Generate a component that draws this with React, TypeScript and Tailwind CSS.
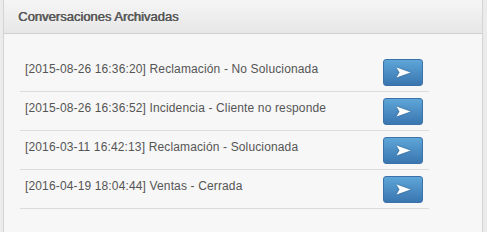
import React from 'react';

const conversations = [
    { id: 1, date: '2015-08-26 16:36:20', title: 'Reclamación - No Solucionada' },
    { id: 2, date: '2015-08-26 16:36:52', title: 'Incidencia - Cliente no responde' },
    { id: 3, date: '2016-03-11 16:42:13', title: 'Reclamación - Solucionada' },
    { id: 4, date: '2016-04-19 18:04:44', title: 'Ventas - Cerrada' },
];

const ArrowIcon = () => (
    <svg width="15" height="11" viewBox="0 0 15 11" className="drop-shadow-[0_0_1px_rgba(0,0,0,0.25)]">
        <path d="M0.5 0.5 L14.5 5.5 L0.5 10.5 L3.5 5.5 Z" fill="#ffffff" />
    </svg>
);

export default function App() {
    return (
        <div className="w-full h-[232px] overflow-hidden bg-[#ebebeb] pl-[3px] pr-[4px] font-['Liberation_Sans',Arial,sans-serif]">
            <div className="h-full bg-[#f7f7f7] border-x border-[#d4d4d4]">
                <div className="h-[34px] flex items-center px-[14px] bg-gradient-to-b from-[#f5f5f5] to-[#e7e7e7] border-b border-[#d0d0d0]">
                    <h2 className="text-[13px] leading-[16px] text-[#555555] [text-shadow:0.6px_0_0_#555555]">Conversaciones Archivadas</h2>
                </div>
                <div className="pt-[19px] pl-[16px] w-[425px]">
                    {conversations.map(c => (
                        <div key={c.id} className="h-[39px] flex items-start justify-between pl-[5px] pr-[6px] border-b border-[#dcdcdc]">
                            <span className="pt-[8px] text-[12px] leading-[16px] tracking-[0.14px] text-[#555555]">[{c.date}] {c.title}</span>
                            <button className="mt-[6px] w-[40px] h-[27px] flex items-center justify-center rounded-[3px] border border-[#3c72aa] bg-gradient-to-b from-[#5ea6d8] to-[#3a76b0]">
                                <ArrowIcon />
                            </button>
                        </div>
                    ))}
                </div>
            </div>
        </div>
    );
}
